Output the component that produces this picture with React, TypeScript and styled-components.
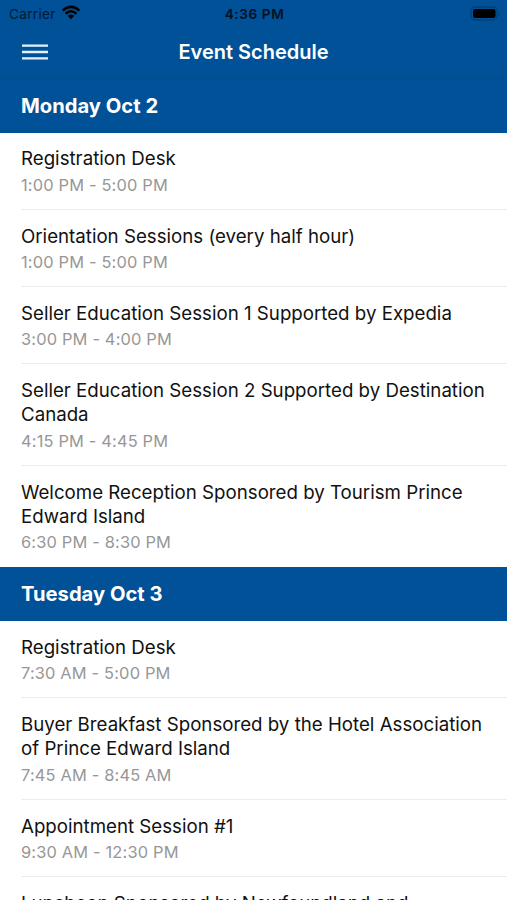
import React from 'react';
import styled, { createGlobalStyle } from 'styled-components';

const Global = createGlobalStyle`
  * { box-sizing: border-box; }
  body { margin: 0; background: #fff; }
`;
const Screen = styled.main`
  width: 507px; height: 900px; overflow: hidden; background: #fff;
  font-family: Inter, sans-serif; color: #111;
`;
const StatusBar = styled.div`
  height: 27px; background: #005197; display: grid; align-items: center;
  grid-template-columns: 1fr auto 1fr; padding: 0 7px 0 9px;
  font-size: 13.6px; color: #02101f;
`;
const Carrier = styled.div`display: flex; align-items: center; gap: 6px; letter-spacing: 0.3px; color: #021a33;`;
const WifiIcon = styled.svg`color: #000; margin: -3px 0 0 -1px;`;
const Clock = styled.div`font-weight: 600; font-size: 13.6px; letter-spacing: 0.6px;`;
const Battery = styled.div`display: flex; justify-content: flex-end; margin: -1px -1px 0 0;`;
const NavBar = styled.header`
  height: 52px; background: #005197; color: #fff; display: grid;
  grid-template-columns: 1fr auto 1fr; align-items: center; padding: 0 22px 2px;
  border-bottom: 1px solid #004c8d;
`;
const MenuButton = styled.button`
  border: 0; padding: 0; background: none; color: #e4f2ff; display: flex; width: 26px;
`;
const Title = styled.h1`margin: 0; font-size: 20px; font-weight: 600; line-height: 24px;`;
const DayHeader = styled.h2`
  margin: 0; height: 53.6px; padding: 0 21px; background: #005197; color: #fff;
  font-size: 20.2px; font-weight: 650; line-height: 53.6px;
`;
const Row = styled.article<{ $last?: boolean }>`
  margin-left: 21px; padding: 14.9px 20px 11.1px 0;
  border-bottom: 1px solid ${p => (p.$last ? 'transparent' : '#ececec')};
`;
const Name = styled.div`font-size: 18.7px; line-height: 24.4px;`;
const Time = styled.div`
  margin-top: 0.8px; font-size: 16.4px; line-height: 25px; letter-spacing: 0.17px; color: #979797;
`;

const days = [
  { day: 'Monday Oct 2', events: [
    ['Registration Desk', '1:00 PM - 5:00 PM'],
    ['Orientation Sessions (every half hour)', '1:00 PM - 5:00 PM'],
    ['Seller Education Session 1 Supported by Expedia', '3:00 PM - 4:00 PM'],
    ['Seller Education Session 2 Supported by Destination Canada', '4:15 PM - 4:45 PM'],
    ['Welcome Reception Sponsored by Tourism Prince Edward Island', '6:30 PM - 8:30 PM'],
  ] },
  { day: 'Tuesday Oct 3', events: [
    ['Registration Desk', '7:30 AM - 5:00 PM'],
    ['Buyer Breakfast Sponsored by the Hotel Association of Prince Edward Island', '7:45 AM - 8:45 AM'],
    ['Appointment Session #1', '9:30 AM - 12:30 PM'],
    ['Luncheon Sponsored by Newfoundland and', ''],
  ] },
];

export default function App() {
  return (
    <Screen>
      <Global />
      <StatusBar>
        <Carrier>Carrier
          <WifiIcon width="20" height="15" viewBox="0 0 20 15" fill="none" stroke="currentColor" strokeWidth="2.5">
            <path d="M1.6 5.6Q10-1.8 18.4 5.6M4.6 8.7Q10 3.9 15.4 8.7" />
            <path d="M6.7 10.8Q10 8 13.3 10.8L10 14.2Z" fill="currentColor" stroke="none" />
          </WifiIcon>
        </Carrier>
        <Clock>4:36 PM</Clock>
        <Battery>
          <svg width="31" height="15" viewBox="0 0 31 15">
            <rect x="1" y="1" width="26" height="13" rx="4" fill="none" stroke="#004078" strokeWidth="1.3" />
            <rect x="3" y="3" width="22.5" height="9" rx="2" fill="#000" />
            <path d="M28.7 5.2q2 2.3 0 4.6z" fill="#004078" />
          </svg>
        </Battery>
      </StatusBar>
      <NavBar>
        <MenuButton aria-label="Open menu">
          <svg width="26" height="18" viewBox="0 0 26 18" stroke="currentColor" strokeWidth="2.4"><path d="M0 2.6h26M0 9h26M0 15.4h26" /></svg>
        </MenuButton>
        <Title>Event Schedule</Title>
      </NavBar>
      {days.map(d => (
        <section key={d.day}>
          <DayHeader>{d.day}</DayHeader>
          {d.events.map(([name, time], i) => (
            <Row key={name} $last={i === d.events.length - 1}><Name>{name}</Name><Time>{time}</Time></Row>
          ))}
        </section>
      ))}
    </Screen>
  );
}
